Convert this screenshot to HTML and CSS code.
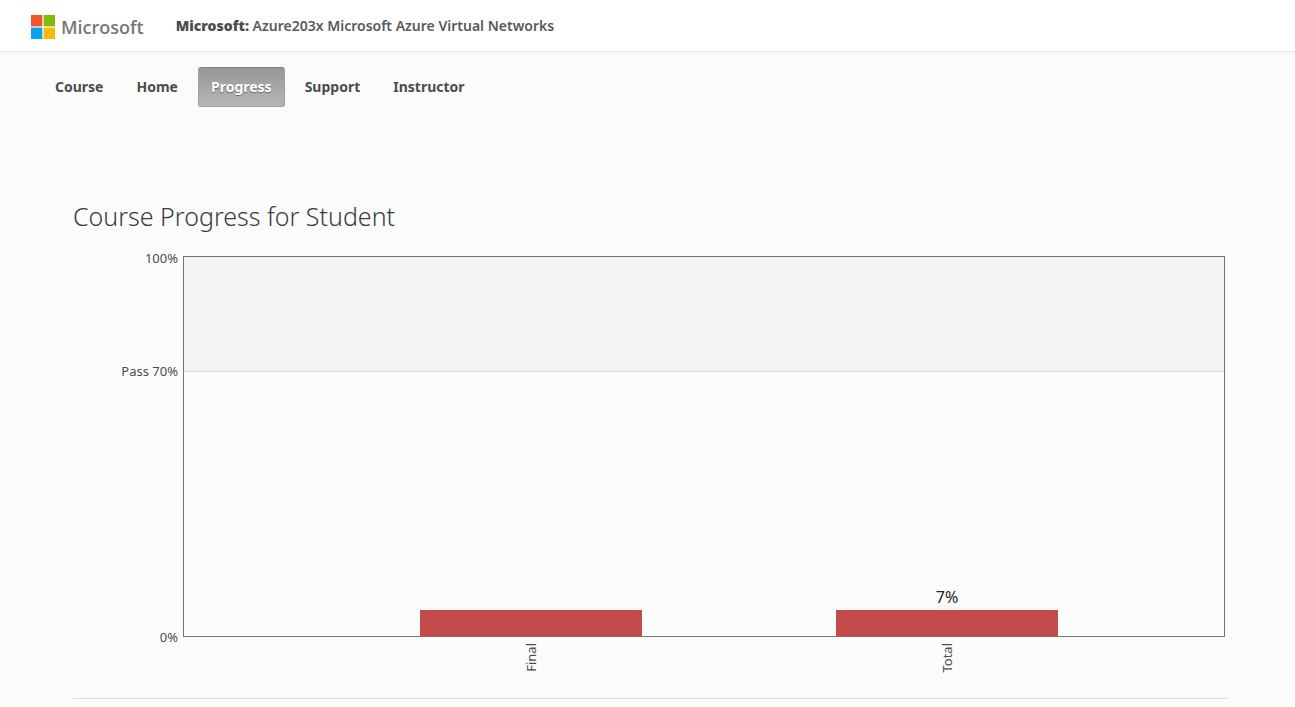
FILE: index.html
```html
<!DOCTYPE html>
<html lang="en">
<head>
<meta charset="utf-8">
<meta name="viewport" content="width=device-width, initial-scale=1">
<title>Progress | Azure203x</title>
<link rel="stylesheet" href="styles.css">
</head>
<body>
<header class="site-header">
  <a class="brand" href="#" aria-label="Microsoft home">
    <svg class="brand-mark" viewBox="0 0 24 24" aria-hidden="true">
      <rect width="11.4" height="11.4" fill="#f1552b"/>
      <rect x="12.6" width="11.4" height="11.4" fill="#80bb0b"/>
      <rect y="12.6" width="11.4" height="11.4" fill="#08a4ec"/>
      <rect x="12.6" y="12.6" width="11.4" height="11.4" fill="#fdb80b"/>
    </svg>
    <span class="brand-name">Microsoft</span>
  </a>
  <p class="course-name"><strong>Microsoft:</strong> Azure203x Microsoft Azure Virtual Networks</p>
</header>
<nav class="tabs" aria-label="Course">
  <a class="tab" href="#">Course</a>
  <a class="tab" href="#">Home</a>
  <a class="tab tab-active" href="#" aria-current="page">Progress</a>
  <a class="tab" href="#">Support</a>
  <a class="tab" href="#">Instructor</a>
</nav>
<main class="panel">
  <h1 class="title">Course Progress for Student</h1>
  <section class="chart" aria-label="Grade chart">
    <div class="y-axis">
      <span>100%</span>
      <span>Pass 70%</span>
      <span>0%</span>
    </div>
    <div class="plot">
      <div class="pass-zone"></div>
      <div class="columns bars">
        <div class="bar-slot first"><div class="bar" style="height: 26px"></div></div>
        <div class="bar-slot second"><span class="bar-value">7%</span><div class="bar" style="height: 26px"></div></div>
      </div>
    </div>
    <div class="columns x-axis">
      <span class="x-label first">Final</span>
      <span class="x-label second">Total</span>
    </div>
  </section>
  <hr class="rule">
</main>
</body>
</html>
```
FILE: styles.css
```css
* {
  box-sizing: border-box;
}

body {
  margin: 0;
  min-height: 100vh;
  display: flex;
  flex-direction: column;
  background: #fbfbfb;
  color: #4c4c4c;
  font-family: "Noto Sans", "Open Sans", sans-serif;
}

.site-header {
  display: flex;
  align-items: center;
  gap: 32px;
  height: 52px;
  padding: 0 31px;
  background: #fff;
  border-bottom: 1px solid #e6e6e6;
  box-shadow: 0 1px 2px #f0f0f0;
}

.brand {
  display: flex;
  align-items: center;
  gap: 6px;
  padding-top: 2px;
  color: #777;
  text-decoration: none;
}

.brand-mark {
  width: 24px;
  height: 24px;
}

.brand-name {
  font: 600 18px/24px "Open Sans", sans-serif;
}

.course-name {
  margin: 0;
  color: #5a5a5a;
  font-size: 14px;
  font-weight: 600;
  line-height: 20px;
}

.course-name strong {
  color: #4c4c4c;
}

.tabs {
  display: flex;
  gap: 7px;
  padding: 15px 42px;
}

.tab {
  padding: 9px 12px;
  border: 1px solid transparent;
  border-radius: 3px;
  color: #4c4c4c;
  font-size: 14px;
  font-weight: 700;
  line-height: 20px;
  text-decoration: none;
}

.tab-active {
  border-color: #a0a0a0;
  border-top-color: #808080;
  background: linear-gradient(#979797, #b6b6b6);
  color: #fff;
  text-shadow: 0 1px 1px #666;
}

.panel {
  flex: 1;
  margin: 0 23px 0 29px;
  padding: 75px 43px 0;
  border: 1px solid #fefefe;
  border-bottom: 0;
  border-radius: 3px 3px 0 0;
}

.title {
  margin: 0 0 22px;
  color: #3c3c3c;
  font-size: 25px;
  font-weight: 300;
  line-height: 36px;
}

.chart {
  display: grid;
  grid-template-columns: 105px 1fr;
  column-gap: 5px;
  margin-right: 3px;
}

.y-axis {
  display: grid;
  grid-template-rows: 113px 266px 20px;
  height: 381px;
  margin-top: -8px;
  font-size: 13px;
  line-height: 20px;
  text-align: right;
}

.plot {
  display: grid;
  grid-template-rows: 115px 1fr;
  height: 381px;
  border: 1px solid #737373;
}

.pass-zone {
  background: #f3f3f3;
  border-bottom: 1px solid #dcdcdc;
}

.columns {
  display: grid;
  grid-template-columns: 236fr 222fr 194fr 222fr 166fr;
}

.bars {
  align-items: end;
}

.first {
  grid-column: 2;
}

.second {
  grid-column: 4;
}

.bar {
  background: #c44b4b;
}

.bar-value {
  display: block;
  color: #222;
  font-size: 16px;
  line-height: 26px;
  text-align: center;
}

.x-axis {
  grid-column: 2;
  height: 61px;
  padding-top: 6px;
}

.x-label {
  justify-self: center;
  align-self: start;
  writing-mode: vertical-rl;
  transform: rotate(180deg);
  font-size: 13px;
  line-height: 20px;
}

.rule {
  margin: 0;
  border: 0;
  border-top: 1px solid #dedede;
}
```
